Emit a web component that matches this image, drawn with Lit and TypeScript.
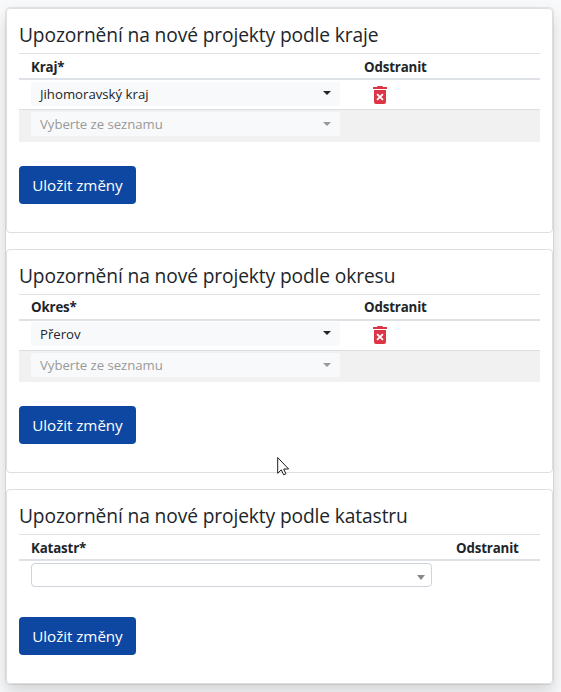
import { LitElement, html, css, svg, nothing } from "lit";
import { customElement, property } from "lit/decorators.js";

interface Row {
  label: string;
  placeholder?: boolean;
}

const trashIcon = svg`
  <path d="M0 1h3.8L4.8 0h4.4l1 1H14v2H0z" />
  <path fill-rule="evenodd" d="M1 4h12v12q0 2-2 2H3q-2 0-2-2zM3.4 8.7 5.7 11 3.4 13.3 4.7 14.6 7 12.3 9.3 14.6 10.6 13.3 8.3 11 10.6 8.7 9.3 7.4 7 9.7 4.7 7.4z" />
`;

@customElement("region-card")
export class RegionCard extends LitElement {
  @property() heading = "";
  @property() column = "";
  @property({ attribute: false }) rows: Row[] = [];
  @property({ type: Boolean, reflect: true }) wide = false;
  @property({ type: Boolean, reflect: true }) compact = false;

  static styles = css`
    :host {
      display: block;
      box-sizing: border-box;
      border: 1px solid #dfdfdf;
      border-radius: 4px;
      background: #fff;
      padding: 12px 12px 0;
      color: #212529;
    }
    .title {
      margin: 0;
      height: 32px;
      font-size: 19.2px;
      font-weight: 400;
      line-height: 28px;
      letter-spacing: -0.115px;
      white-space: nowrap;
    }
    :host([compact]) .title {
      line-height: 27px;
    }
    .row {
      display: grid;
      grid-template-columns: 333px 1fr;
      box-sizing: border-box;
      padding-left: 12px;
      height: 30px;
      border-top: 1px solid #dee2e6;
    }
    :host([wide]) .row {
      grid-template-columns: 425px 1fr;
    }
    .head {
      height: 27px;
      border-bottom: 2px solid #dee2e6;
      font-size: 13.3px;
      font-weight: 700;
      line-height: 26px;
      letter-spacing: -0.15px;
    }
    :host([compact]) .head {
      line-height: 24px;
    }
    .first {
      border-top: 0;
      height: 29px;
      padding-top: 2px;
    }
    :host([compact]) .first {
      padding-top: 1px;
    }
    .empty {
      height: 33px;
      padding-top: 2px;
      background: #f1f1f1;
      border-top-color: #dcdfe1;
    }
    :host([compact]) .empty {
      height: 32px;
    }
    .select {
      display: flex;
      align-items: center;
      justify-content: space-between;
      box-sizing: border-box;
      width: 309px;
      height: 24px;
      padding: 0 9px;
      border-radius: 3px;
      background: #f8f9fa;
      font-size: 13.2px;
      line-height: 24px;
    }
    .muted {
      color: #999;
      letter-spacing: -0.04px;
    }
    .caret {
      border: 4px solid transparent;
      border-top-color: currentColor;
      border-bottom: 0;
      margin-bottom: 2px;
    }
    .muted .caret {
      margin-bottom: 1px;
    }
    .combo {
      width: 401px;
      padding-right: 6px;
      border: 1px solid #ced4da;
      border-radius: 4px;
      background: #fff;
      color: #888;
      justify-content: flex-end;
    }
    .combo .caret {
      border-width: 5px 4px 0;
      margin-bottom: -5px;
    }
    .trash {
      width: 14px;
      height: 18px;
      margin: 4px 0 0 9px;
      fill: #dc3545;
    }
    .save {
      display: block;
      width: 117px;
      height: 38px;
      margin: 24px 0 0;
      padding: 0;
      border: 0;
      border-radius: 4px;
      background: #0d47a1;
      color: #fff;
      font: inherit;
      font-size: 15.2px;
      letter-spacing: -0.05px;
    }
    :host([wide]) .save {
      margin-top: 27px;
    }
  `;

  render() {
    return html`
      <h5 class="title">${this.heading}</h5>
      <div class="row head"><span>${this.column}</span><span>Odstranit</span></div>
      ${this.wide
        ? html`<div class="row first"><div class="select combo"><i class="caret"></i></div></div>`
        : this.rows.map(
            (row) => html`
              <div class="row ${row.placeholder ? "empty" : "first"}">
                <div class="select ${row.placeholder ? "muted" : ""}">
                  <span>${row.label}</span><i class="caret"></i>
                </div>
                ${row.placeholder ? nothing : html`<svg class="trash" viewBox="0 0 14 18">${trashIcon}</svg>`}
              </div>
            `
          )}
      <button class="save">Uložit změny</button>
    `;
  }
}

@customElement("app-root")
export class AppRoot extends LitElement {
  static styles = css`
    :host {
      display: block;
      box-sizing: border-box;
      height: 692px;
      padding: 8px 8px 0 6px;
      overflow: hidden;
      position: relative;
      background: #f8f9fa;
      font-family: "Open Sans", "Noto Sans", sans-serif;
    }
    .panel {
      display: flex;
      flex-direction: column;
      gap: 16px;
      height: 676px;
      border-radius: 4px;
      background: #fff;
      box-shadow: 0 0 0 1px rgba(0, 0, 0, 0.08), 0 8px 16px rgba(0, 0, 0, 0.15);
    }
    .kraj {
      height: 225px;
    }
    .okres {
      height: 224px;
    }
    .katastr {
      height: 195px;
    }
    .pointer {
      position: absolute;
      left: 277px;
      top: 456px;
      width: 13px;
      height: 21px;
    }
  `;

  render() {
    return html`
      <main class="panel">
        <region-card
          class="kraj"
          heading="Upozornění na nové projekty podle kraje"
          column="Kraj*"
          .rows=${[{ label: "Jihomoravský kraj" }, { label: "Vyberte ze seznamu", placeholder: true }]}
        ></region-card>
        <region-card
          class="okres"
          compact
          heading="Upozornění na nové projekty podle okresu"
          column="Okres*"
          .rows=${[{ label: "Přerov" }, { label: "Vyberte ze seznamu", placeholder: true }]}
        ></region-card>
        <region-card
          class="katastr"
          heading="Upozornění na nové projekty podle katastru"
          column="Katastr*"
          wide
        ></region-card>
      </main>
      <svg class="pointer" viewBox="0 0 13 21">
        <path
          d="M.7 1.5v15.8l3.6-3.5 2.3 5 2.3-1-2.2-4.8h4.9z"
          fill="#fff"
          stroke="#1c1c24"
          stroke-width="1"
        />
      </svg>
    `;
  }
}
